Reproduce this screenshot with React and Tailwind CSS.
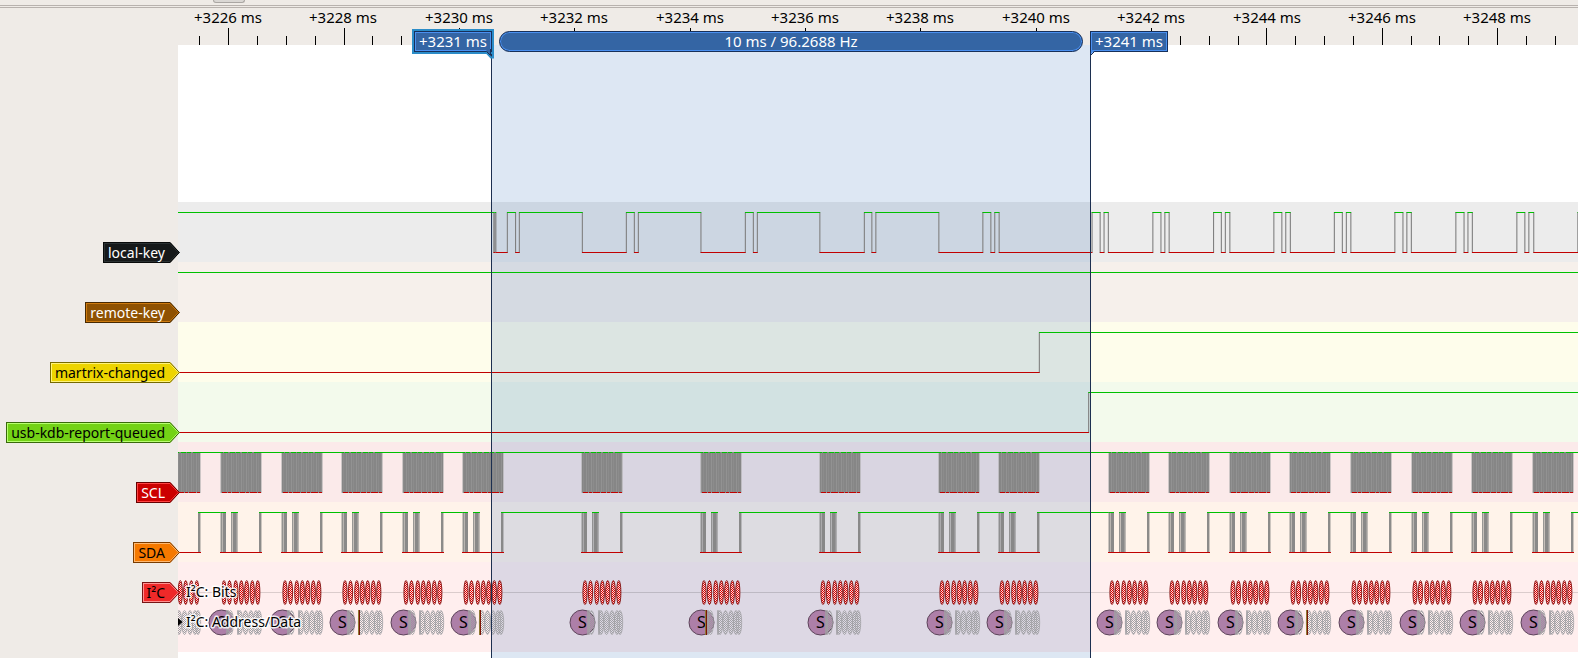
import React from "react";

const ORIGIN = 178;
const CURSOR_A = 491;
const CURSOR_B = 1090;
const FAR = 6000;

const BURSTS = [
  160, 221, 282, 342, 403, 463, 582, 701, 820, 939, 999, 1109, 1169, 1230, 1290,
  1351, 1412, 1472, 1533,
];
const MARKED = { 342: 17, 463: 17, 701: 5, 1290: 17 };

const LOCAL_EDGES = [
  493.5, 494.5, 495.5, 507, 515.2, 519, 582, 626, 634, 638, 700.6, 745, 753, 757,
  819.5, 864, 871.5, 875.5, 938.5, 982.5, 990.5, 994.4, 998.8, 1091.7, 1099.8,
  1103.7, 1108, 1152.5, 1160.6, 1164.5, 1168.8, 1213.2, 1221, 1225, 1229.5,
  1273.5, 1281.5, 1285.4, 1290, 1334, 1342, 1346, 1350.5, 1394.5, 1402.6, 1406.5,
  1411, 1455.5, 1463.7, 1467.6, 1472, 1516.5, 1524.5, 1528.5, 1533.4, 1577.5,
];

const GREEN = "#00c000";
const RED = "#c00000";

function Plot({ label, children }) {
  return (
    <svg
      className="absolute inset-0 h-full w-full"
      role="img"
      aria-label={label}
    >
      <defs>
        <pattern id="clock" width="5" height="4" patternUnits="userSpaceOnUse">
          <rect width="5" height="4" fill="#868686" />
          <rect x="1" width="1" height="4" fill="#929292" />
          <rect x="3" width="1" height="4" fill="#8c8c8c" />
        </pattern>
        <pattern id="redCheck" width="2" height="2" patternUnits="userSpaceOnUse">
          <rect width="2" height="2" fill="#f8dcdc" />
          <rect width="1" height="1" fill="#e00000" />
          <rect x="1" y="1" width="1" height="1" fill="#e00000" />
        </pattern>
        <pattern id="greyCheck" width="2" height="2" patternUnits="userSpaceOnUse">
          <rect width="1" height="1" fill="#a2a2a6" />
          <rect x="1" y="1" width="1" height="1" fill="#a2a2a6" />
        </pattern>
      </defs>
      <g transform={`translate(${-ORIGIN} 0)`}>
        <rect
          x={CURSOR_A}
          width={CURSOR_B - CURSOR_A}
          height="100%"
          fill="#1c5faf"
          fillOpacity="0.15"
        />
        {children}
        <rect x={CURSOR_A} width="1" height="100%" fill="#1c2f50" />
        <rect x={CURSOR_B} width="1" height="100%" fill="#1c2f50" />
      </g>
    </svg>
  );
}

function DigitalTrace({ edges, startHigh }) {
  const stops = [ORIGIN, ...edges, FAR];
  return (
    <g>
      {edges.map((x) => (
        <rect key={x} x={x - 0.2} y="10" width="1.1" height="41" fill="#808080" />
      ))}
      {stops.slice(0, -1).map((x, i) => {
        const high = i % 2 === 0 ? startHigh : !startHigh;
        return (
          <rect
            key={x}
            x={x}
            y={high ? 10 : 50}
            width={stops[i + 1] - x + 0.6}
            height="1"
            fill={high ? GREEN : RED}
          />
        );
      })}
    </g>
  );
}

function ClockTrace() {
  return (
    <g>
      <rect x={ORIGIN} y="10" width={FAR} height="1" fill={GREEN} />
      {BURSTS.map((x) => (
        <g key={x}>
          <rect x={x - 1} y="11" width="42" height="40" fill="#a8a8a8" fillOpacity="0.55" />
          <rect x={x} y="11" width="40" height="40" fill="url(#clock)" />
          <line x1={x + 2} x2={x + 38} y1="10.5" y2="10.5" stroke="#6e9a6e" strokeDasharray="1 4 2 5" />
          <line x1={x + 1} x2={x + 40} y1="50.5" y2="50.5" stroke={RED} strokeDasharray="5 1 3 1 7 1" />
        </g>
      ))}
    </g>
  );
}

const DATA_BARS = [
  [-1, 1, 0.4],
  [0, 1, 0.85],
  [1, 1, 0.55],
  [2, 3, 0.92],
  [10, 1, 0.8],
  [11, 1, 0.45],
  [12, 3, 0.92],
  [15, 1, 0.75],
  [16, 1, 0.5],
  [38, 2, 0.9],
  [40, 1, 0.4],
];

function DataTrace() {
  return (
    <g>
      {BURSTS.map((x, i) => (
        <g key={x}>
          {DATA_BARS.map(([dx, w, o]) => (
            <rect key={dx} x={x + dx} y="10" width={w} height="41" fill="#808080" fillOpacity={o} />
          ))}
          <rect x={x} y="10" width="5" height="1" fill={GREEN} />
          <rect x={x + 10} y="10" width="7" height="1" fill={GREEN} />
          <rect
            x={x + 38}
            y="10"
            width={(BURSTS[i + 1] ?? FAR) - x - 38}
            height="1"
            fill={GREEN}
          />
          <rect x={x - 1} y="50" width="42" height="1" fill={RED} />
        </g>
      ))}
    </g>
  );
}

const BIT_CENTERS = [3, 8.5, 14.8, 20.3, 25.7, 31.3, 36.8];
const DATA_CENTERS = [19, 24.5, 30, 35, 38];

function DecoderTrace() {
  return (
    <g fontFamily='"Noto Sans", sans-serif'>
      <rect x={ORIGIN} y="30" width={FAR} height="1" fill="#000" fillOpacity="0.14" />
      {BURSTS.map((x) => (
        <g key={x}>
          {BIT_CENTERS.map((dx) => (
            <ellipse
              key={dx}
              cx={x + dx}
              cy="30.5"
              rx="2.1"
              ry="12"
              fill="url(#redCheck)"
              stroke="#7e1010"
              strokeOpacity="0.9"
            />
          ))}
          {x > ORIGIN && (
            <g>
              <circle cx={x + 0.5} cy="60.5" r="12.5" fill="#ad7fa8" stroke="#5c4359" />
              <text x={x + 0.5} y="66" textAnchor="middle" fontSize="16" fill="#000">
                S
              </text>
            </g>
          )}
          <rect x={x + 5} y="48" width="3" height="25" rx="1" fill="#a09fa3" fillOpacity="0.8" />
          <ellipse cx={x + 9.5} cy="60.5" rx="3" ry="12" fill="url(#greyCheck)" stroke="#a0a0a4" strokeOpacity="0.7" />
          <rect x={x + 16} y="48" width="2" height="25" rx="1" fill="#a09fa3" fillOpacity="0.8" />
          {DATA_CENTERS.map((dx) => (
            <ellipse
              key={dx}
              cx={x + dx}
              cy="60.5"
              rx="2.7"
              ry="12"
              fill="url(#greyCheck)"
              stroke="#a0a0a4"
              strokeOpacity="0.75"
            />
          ))}
          {MARKED[x] && (
            <g>
              <rect x={x + MARKED[x] - 1} y="48" width="1" height="25" fill="#8f7a35" />
              <rect x={x + MARKED[x]} y="48" width="1" height="25" fill="#7c1505" />
            </g>
          )}
        </g>
      ))}
      <path d="M178 56v8l4.5-4z" fill="#000" />
      <g fontSize="14" fill="#000" stroke="#fff" strokeOpacity="0.85" strokeWidth="3" strokeLinejoin="round" paintOrder="stroke">
        <text x="186" y="35">I²C: Bits</text>
        <text x="186" y="65">I²C: Address/Data</text>
      </g>
    </g>
  );
}

function Tag({ name, box, fill, dark, light }) {
  return (
    <button type="button" className="relative z-10 -mr-0.5 flex h-[21px] items-stretch whitespace-nowrap text-sm">
      <span className={`flex items-center border border-r-0 pl-1 pr-[5px] leading-[19px] ${box}`}>
        {name}
      </span>
      <svg width="10" height="21" viewBox="0 0 10 21" aria-hidden="true">
        <path d="M0 0L9.7 10.5L0 21z" fill={fill} />
        <path d="M0 1.5L8.3 10.5L0 19.5" fill="none" stroke={light} />
        <path d="M0 .5L9.3 10.5L0 20.5" fill="none" stroke={dark} />
      </svg>
    </button>
  );
}

const CHANNELS = [
  {
    name: "local-key",
    band: "bg-[#ececec]",
    box: "bg-[#16191a] border-[#080a0a] text-white shadow-[inset_1px_1px_0_#2b3133,inset_0_-1px_0_#2b3133]",
    fill: "#16191a", dark: "#080a0a", light: "#2b3133",
    trace: <DigitalTrace edges={LOCAL_EDGES} startHigh />,
  },
  {
    name: "remote-key",
    band: "bg-[#f6f0eb]",
    box: "bg-[#8f5202] border-[#472901] text-white shadow-[inset_1px_1px_0_#cd7a10,inset_0_-1px_0_#cd7a10]",
    fill: "#8f5202", dark: "#472901", light: "#cd7a10",
    trace: <DigitalTrace edges={[]} startHigh />,
  },
  {
    name: "martrix-changed",
    band: "bg-[#fefdeb]",
    box: "bg-[#edd400] border-[#766a00] text-black shadow-[inset_1px_1px_0_#fff37a,inset_0_-1px_0_#fff37a]",
    fill: "#edd400", dark: "#766a00", light: "#fff37a",
    trace: <DigitalTrace edges={[1039]} startHigh={false} />,
  },
  {
    name: "usb-kdb-report-queued",
    band: "bg-[#f3faec]",
    box: "bg-[#73d216] border-[#39690b] text-black shadow-[inset_1px_1px_0_#b8ff70,inset_0_-1px_0_#b8ff70]",
    fill: "#73d216", dark: "#39690b", light: "#b8ff70",
    trace: <DigitalTrace edges={[1088.3]} startHigh={false} />,
  },
  {
    name: "SCL",
    band: "bg-[#fbeaea]",
    box: "bg-[#cc0000] border-[#660000] text-white shadow-[inset_1px_1px_0_#ff4444,inset_0_-1px_0_#ff4444]",
    fill: "#cc0000", dark: "#660000", light: "#ff4444",
    trace: <ClockTrace />,
  },
  {
    name: "SDA",
    band: "bg-[#fff3ea]",
    box: "bg-[#f57900] border-[#7a3c00] text-black shadow-[inset_1px_1px_0_#ffb870,inset_0_-1px_0_#ffb870]",
    fill: "#f57900", dark: "#7a3c00", light: "#ffb870",
    trace: <DataTrace />,
  },
];

const MAJORS = Array.from({ length: 12 }, (_, i) => i);
const TICKS = Array.from({ length: 48 }, (_, i) => i - 1);

function Ruler() {
  return (
    <svg className="absolute inset-0 h-full w-full" role="img" aria-label="Time ruler">
      <g
        transform={`translate(${-ORIGIN} 0)`}
        fontFamily='"Noto Sans", sans-serif'
        fontSize="15"
        textAnchor="middle"
      >
        {TICKS.map((k) => (
          <rect
            key={k}
            x={Math.floor(228.7 + k * 28.84)}
            y={k % 4 === 0 ? 20 : 28}
            width="1"
            height={k % 4 === 0 ? 17 : 9}
            fill="#000"
          />
        ))}
        {MAJORS.map((i) => (
          <text key={i} x={228 + Math.round(i * 115.4)} y="15">
            {`+${3226 + i * 2} ms`}
          </text>
        ))}
      </g>
    </svg>
  );
}

export default function App() {
  return (
    <main className="flex min-h-screen flex-col overflow-hidden bg-[#efebe7] font-['Noto_Sans',sans-serif] text-[15px] text-black">
      <header className="flex h-2 flex-col">
        <div className="flex flex-1 items-start">
          <span className="ml-[213px] h-[3px] w-8 rounded-b border border-t-0 border-[#aaa6a3] bg-[#dad7d4]" />
        </div>
        <div className="h-[3px] border-y border-[#b8b2ae]" />
      </header>

      <section className="grid flex-1 grid-cols-[178px_minmax(0,1fr)] grid-rows-[37px_157px_repeat(6,60px)_90px_1fr]">
        <div />
        <div className="relative z-20">
          <Ruler />
          <button
            type="button"
            className="absolute left-[236px] top-[23px] flex h-[21px] w-[78px] items-center justify-center border border-[#17305a] bg-[#3465a4] leading-[19px] text-white shadow-[inset_0_0_0_1px_#4a90f0,0_0_0_2px_#2b8cc8]"
          >
            +3231 ms
            <svg className="absolute -right-[3px] top-[17px]" width="9" height="10" viewBox="0 0 9 10" aria-hidden="true">
              <path d="M1 3L6 8.5H8V0" fill="none" stroke="#2b8cc8" strokeWidth="2" />
              <path d="M1 1H5.5V6.5z" fill="#3465a4" />
              <path d="M1.5 2.5L5.5 6.5V0" fill="none" stroke="#17305a" />
            </svg>
          </button>
          <div className="absolute left-[321px] top-[23px] flex h-[21px] w-[584px] items-center justify-center rounded-full border border-[#17305a] bg-[#3465a4] leading-[19px] text-white shadow-[inset_0_0_0_1px_#4a90f0]">
            10 ms / 96.2688 Hz
          </div>
          <button
            type="button"
            className="absolute left-[912px] top-[23px] flex h-[21px] w-[78px] items-center justify-center border border-[#17305a] bg-[#3465a4] leading-[19px] text-white shadow-[inset_0_0_0_1px_#4a90f0]"
          >
            +3241 ms
            <svg className="absolute -left-px top-[17px]" width="6" height="7" viewBox="0 0 6 7" aria-hidden="true">
              <path d="M.5 1H5L.5 6z" fill="#4a90f0" />
              <path d="M.5 0V6.5L4.5 2.5" fill="none" stroke="#17305a" />
            </svg>
          </button>
        </div>

        <div />
        <div className="relative bg-white">
          <Plot label="Selected range" />
        </div>

        {CHANNELS.map((c) => (
          <React.Fragment key={c.name}>
            <div className="flex items-start justify-end pt-10">
              <Tag {...c} />
            </div>
            <div className={`relative ${c.band}`}>
              <Plot label={`${c.name} trace`}>{c.trace}</Plot>
            </div>
          </React.Fragment>
        ))}

        <div className="flex items-start justify-end pt-5">
          <Tag
            name="I²C"
            box="bg-[#ef2929] border-[#771414] text-black shadow-[inset_1px_1px_0_#ff9090,inset_0_-1px_0_#ff9090]"
            fill="#ef2929"
            dark="#771414"
            light="#ff9090"
          />
        </div>
        <div className="relative bg-[#ffeeee]">
          <Plot label="I²C decoder">
            <DecoderTrace />
          </Plot>
        </div>

        <div />
        <div className="relative bg-white">
          <Plot label="Selected range end" />
        </div>
      </section>
    </main>
  );
}
